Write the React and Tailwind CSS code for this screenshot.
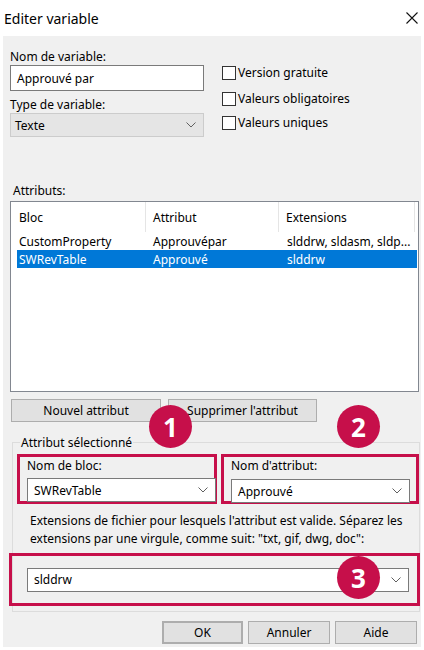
import React from "react";

const Chevron = () => (
  <svg width="10" height="6" viewBox="0 0 10 6" className="shrink-0">
    <path d="M0.5 0.5 L5 5 L9.5 0.5" fill="none" stroke="#606060" strokeWidth="1" />
  </svg>
);

const Badge = ({ n, className }) => (
  <div
    className={`absolute w-[43px] h-[43px] rounded-full bg-[#c60f4a] text-white flex items-center justify-center text-[26px] font-bold leading-none ${className}`}
  >
    {n}
  </div>
);

const Checkbox = ({ label }) => (
  <div className="flex items-center gap-[2px] h-[15px]">
    <div className="w-[14px] h-[14px] border border-[#333] bg-white" />
    <span>{label}</span>
  </div>
);

const Select = ({ value, className }) => (
  <div className={`flex items-center justify-between bg-white border border-[#7a7a7a] pl-[6px] pr-[7px] ${className}`}>
    <span>{value}</span>
    <Chevron />
  </div>
);

const Button = ({ children, className }) => (
  <div className={`flex items-center justify-center bg-[#e1e1e1] border border-[#adadad] ${className}`}>
    {children}
  </div>
);

const rows = [
  { bloc: "CustomProperty", attr: "Approuvépar", ext: "slddrw, sldasm, sldp..." },
  { bloc: "SWRevTable", attr: "Approuvé", ext: "slddrw", selected: true },
];

export default function App() {
  return (
    <div className="w-[424px] h-[650px] bg-white text-black text-[12px] leading-[15px] font-['Noto_Sans','Open_Sans',sans-serif] overflow-hidden">
      {/* title bar */}
      <div className="h-[36px] flex items-center justify-between pl-[4px] pr-[6px]">
        <span className="text-[14px]">Editer variable</span>
        <svg width="12" height="12" viewBox="0 0 12 12">
          <path d="M0.5 0.5 L11.5 11.5 M11.5 0.5 L0.5 11.5" stroke="#111" strokeWidth="1.1" />
        </svg>
      </div>

      {/* body */}
      <div className="relative mx-[3px] h-[611px] bg-[#f0f0f0]">
        {/* top fields */}
        <div className="flex pt-[13px] pl-[7px]">
          <div className="w-[194px]">
            <div>Nom de variable:</div>
            <div className="mt-[1px] h-[26px] bg-white border border-[#7a7a7a] flex items-center pl-[6px]">Approuvé par</div>
            <div className="mt-[6px]">Type de variable:</div>
            <div className="mt-[1px] h-[24px] bg-[#e5e5e5] border border-[#cccccc] flex items-center justify-between pl-[4px] pr-[7px]">
              <span>Texte</span>
              <Chevron />
            </div>
          </div>
          <div className="ml-[18px] pt-[16px] flex flex-col gap-[12px]">
            <Checkbox label="Version gratuite" />
            <div className="-mt-[1px] flex flex-col gap-[9px]">
              <Checkbox label="Valeurs obligatoires" />
              <Checkbox label="Valeurs uniques" />
            </div>
          </div>
        </div>

        {/* attributes list */}
        <div className="mt-[46px] pl-[10px]">Attributs:</div>
        <div className="mt-[3px] ml-[7px] w-[409px] h-[191px] bg-white border border-[#828790]">
          <div className="flex h-[30px] items-center pl-[7px]">
            <div className="w-[128px] h-full flex items-center pl-[1px] border-r border-[#e5e5e5]">Bloc</div>
            <div className="w-[133px] h-full flex items-center pl-[7px] border-r border-[#e5e5e5]">Attribut</div>
            <div className="w-[136px] h-full flex items-center pl-[7px] border-r border-[#e5e5e5]">Extensions</div>
          </div>
          {rows.map((r) => (
            <div
              key={r.bloc}
              className={`flex h-[18px] items-center ml-[6px] mr-[1px] pl-[2px] ${r.selected ? "bg-[#0078d7] text-white" : ""}`}
            >
              <div className="w-[134px]">{r.bloc}</div>
              <div className="w-[134px]">{r.attr}</div>
              <div className="whitespace-nowrap">{r.ext}</div>
            </div>
          ))}
        </div>

        {/* list buttons */}
        <div className="flex mt-[7px] ml-[8px] gap-[7px]">
          <Button className="w-[150px] h-[23px]">Nouvel attribut</Button>
          <Button className="w-[149px] h-[23px]">Supprimer l'attribut</Button>
        </div>

        {/* group box */}
        <div className="relative mt-[20px] ml-[9px] w-[408px] h-[170px] border border-[#dcdcdc]">
          <div className="absolute -top-[8px] left-[7px] bg-[#f0f0f0] px-[1px]">Attribut sélectionné</div>

          <div className="flex mt-[11px] ml-[4px] gap-[4px]">
            <div className="w-[200px] h-[50px] border-[3px] border-[#c60f4a] pl-[7px] pt-[1px]">
              <div>Nom de bloc:</div>
              <Select value="SWRevTable" className="mt-[5px] h-[24px] w-[189px]" />
            </div>
            <div className="w-[199px] h-[50px] border-[3px] border-[#c60f4a] pl-[7px] pt-[1px]">
              <div>Nom d'attribut:</div>
              <Select value="Approuvé" className="mt-[6px] h-[24px] w-[179px]" />
            </div>
          </div>

          <div className="mt-[8px] ml-[17px] leading-[18px]">
            Extensions de fichier pour lesquels l'attribut est valide. Séparez les
            <br />
            extensions par une virgule, comme suit: "txt, gif, dwg, doc":
          </div>

          <div className="mt-[5px] -ml-[4px] w-[411px] h-[53px] border-[3px] border-[#c60f4a] flex items-center pl-[15px]">
            <Select value="slddrw" className="h-[24px] w-[382px]" />
          </div>
        </div>

        {/* dialog buttons */}
        <div className="flex justify-end gap-[5px] mt-[9px] pr-[4px]">
          <Button className="w-[81px] h-[23px] border-2 border-[#0078d7]">OK</Button>
          <Button className="w-[82px] h-[23px]">Annuler</Button>
          <Button className="w-[82px] h-[23px]">Aide</Button>
        </div>

        <Badge n="1" className="left-[146px] top-[369px]" />
        <Badge n="2" className="left-[334px] top-[369px]" />
        <Badge n="3" className="left-[334px] top-[520px]" />
      </div>
    </div>
  );
}
